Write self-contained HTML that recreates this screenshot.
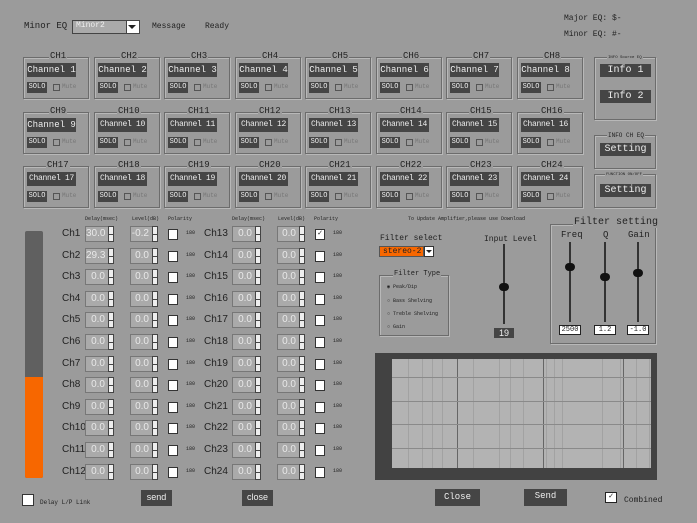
<!DOCTYPE html><html><head><meta charset="utf-8"><style>
body{margin:0;width:697px;height:523px;background:#9b9b9b;position:relative;overflow:hidden;font-family:"Liberation Mono","DejaVu Sans Mono",monospace;color:#222}
div,span{position:absolute;box-sizing:border-box}
.t{font-size:9px;white-space:nowrap}
.grp{border:1px solid #6c6c6c;box-shadow:1px 1px 0 #b8b8b8 inset,1px 1px 0 #b8b8b8}
.lg{font-size:9px;background:#9b9b9b;padding:0 1px;top:-7px;line-height:11px;color:#222;white-space:nowrap}
.dk{background:#454545;color:#eee;font-size:9px;text-align:center;line-height:13px;white-space:nowrap;overflow:hidden}
.cb{width:7px;height:7px;border:1px solid #555;background:#9b9b9b}
.inp{background:#aaa;border:1px solid #777;border-right:none;color:#e8e8e8;font-size:10px;text-align:right;padding-right:3px;line-height:14px;font-family:"Liberation Sans",sans-serif}
.sp{background:#eee;border:1px solid #444;width:6px;height:16px}
.sp:after{content:"";position:absolute;left:0;right:0;top:7px;height:1px;background:#444}
.wc{width:10px;height:11px;background:#fff;border:1px solid #333;text-align:center}
.ch{font-family:"Liberation Sans",sans-serif;font-size:10px;color:#222}
</style></head><body>
<div class="t" style="left:24px;top:21px">Minor EQ</div>
<div style="left:72px;top:20px;width:68px;height:14px;background:#aaa;border:1px solid #444"><span class="t" style="left:3px;top:0;color:#eee;font-size:8px">Minor2</span><span style="right:0;top:0;width:13px;height:12px;background:#fff;border-left:1px solid #444"></span><span style="right:3px;top:4px;border:4px solid transparent;border-top:4px solid #222"></span></div>
<div class="t" style="left:152px;top:22px;font-size:8px">Message</div>
<div class="t" style="left:205px;top:22px;font-size:8px">Ready</div>
<div class="t" style="left:564px;top:14px;font-size:8px">Major EQ:  $-</div>
<div class="t" style="left:564px;top:30px;font-size:8px">Minor EQ:  #-</div>
<div id="c"></div>
<div class="grp" style="left:594px;top:57px;width:62px;height:63px"><span class="lg" style="left:12px;font-size:4px;top:-3px;line-height:6px">INFO Source EQ</span></div>
<div class="dk" style="left:600px;top:64px;width:51px;height:13px;font-size:10px">Info 1</div>
<div class="dk" style="left:600px;top:90px;width:51px;height:13px;font-size:10px">Info 2</div>
<div class="grp" style="left:594px;top:135px;width:62px;height:34px"><span class="lg" style="left:12px;font-size:6px;top:-4px;line-height:8px">INFO CH EQ</span></div>
<div class="dk" style="left:600px;top:143px;width:51px;height:13px;font-size:10px">Setting</div>
<div class="grp" style="left:594px;top:174px;width:62px;height:34px"><span class="lg" style="left:10px;font-size:4px;top:-3px;line-height:6px">FUNCTION ON/OFF</span></div>
<div class="dk" style="left:600px;top:184px;width:51px;height:13px;font-size:10px">Setting</div>
<div style="left:25px;top:231px;width:18px;height:247px;background:#606060;border-radius:2px"></div>
<div style="left:25px;top:377px;width:18px;height:101px;background:#f76700;border-radius:0 0 2px 2px"></div>
<div class="t" style="left:85px;top:216px;font-size:5px">Delay(msec)</div>
<div class="t" style="left:132px;top:216px;font-size:5px">Level(dB)</div>
<div class="t" style="left:168px;top:216px;font-size:5px">Polarity</div>
<div class="t" style="left:232px;top:216px;font-size:5px">Delay(msec)</div>
<div class="t" style="left:278px;top:216px;font-size:5px">Level(dB)</div>
<div class="t" style="left:314px;top:216px;font-size:5px">Polarity</div>
<div id="r"></div>
<div style="left:22px;top:494px;width:12px;height:12px;background:#fff;border:1px solid #333"></div>
<div class="t" style="left:40px;top:499px;font-size:6px">Delay L/P Link</div>
<div class="dk" style="left:141px;top:490px;width:31px;height:16px;line-height:15px;font-family:'Liberation Sans',sans-serif">send</div>
<div class="dk" style="left:242px;top:490px;width:31px;height:16px;line-height:15px;font-family:'Liberation Sans',sans-serif">close</div>
<div class="t" style="left:408px;top:216px;font-size:5px">To Update Amplifier,please use Download</div>
<div class="t" style="left:380px;top:234px;font-size:8px">Filter select</div>
<div style="left:379px;top:246px;width:45px;height:11px;background:#f76700;border:1px solid #555"><span class="t" style="left:3px;top:0;font-size:8px;line-height:9px;color:#222">stereo-2</span></div>
<div style="left:424px;top:246px;width:10px;height:11px;background:#fff;border:1px solid #333"><span style="left:1px;top:3px;border:3px solid transparent;border-top:3px solid #222"></span></div>
<div class="grp" style="left:379px;top:275px;width:70px;height:61px"><span class="lg" style="left:13px;font-size:7px">Filter Type</span></div>
<div class="t" style="left:387px;top:284px;font-size:5px">◉  Peak/Dip</div>
<div class="t" style="left:387px;top:298px;font-size:5px">○  Bass Shelving</div>
<div class="t" style="left:387px;top:311px;font-size:5px">○  Treble Shelving</div>
<div class="t" style="left:387px;top:324px;font-size:5px">○  Gain</div>
<div class="t" style="left:484px;top:235px;font-size:8px">Input Level</div>
<div style="left:503px;top:244px;width:2px;height:80px;background:#333"></div>
<div style="left:499px;top:283px;width:10px;height:8px;background:#111;border-radius:4px"></div>
<div class="dk" style="left:494px;top:328px;width:20px;height:10px;line-height:10px;font-family:'Liberation Sans',sans-serif">19</div>
<div class="grp" style="left:550px;top:224px;width:106px;height:120px"><span class="lg" style="left:22px;font-size:10px;top:-8px">Filter setting</span></div>
<div class="t" style="left:561px;top:230px;font-size:9px">Freq</div>
<div class="t" style="left:603px;top:230px;font-size:9px">Q</div>
<div class="t" style="left:628px;top:230px;font-size:9px">Gain</div>
<div style="left:569px;top:242px;width:2px;height:80px;background:#333"></div>
<div style="left:565px;top:263px;width:10px;height:8px;background:#111;border-radius:4px"></div>
<div style="left:604px;top:242px;width:2px;height:80px;background:#333"></div>
<div style="left:600px;top:273px;width:10px;height:8px;background:#111;border-radius:4px"></div>
<div style="left:637px;top:242px;width:2px;height:80px;background:#333"></div>
<div style="left:633px;top:269px;width:10px;height:8px;background:#111;border-radius:4px"></div>
<div style="left:559px;top:325px;width:22px;height:10px;background:#fff;border:1px solid #222;font-size:7px;text-align:center;line-height:8px">2500</div>
<div style="left:594px;top:325px;width:22px;height:10px;background:#fff;border:1px solid #222;font-size:7px;text-align:center;line-height:8px">1.2</div>
<div style="left:627px;top:325px;width:22px;height:10px;background:#fff;border:1px solid #222;font-size:7px;text-align:center;line-height:8px">-1.0</div>
<div style="left:375px;top:353px;width:282px;height:127px;background:#424242"></div>
<div id="g" style="left:392px;top:359px;width:259px;height:109px;background:#b3b3b3;overflow:hidden"></div>
<div class="dk" style="left:435px;top:489px;width:45px;height:17px;line-height:17px">Close</div>
<div class="dk" style="left:524px;top:489px;width:43px;height:17px;line-height:15px">Send</div>
<div style="left:605px;top:492px;width:12px;height:11px;background:#fff;border:1px solid #222;font-size:8px;line-height:8px;text-align:center">✓</div>
<div class="t" style="left:624px;top:496px;font-size:8px">Combined</div>
<script>
var c='';
for(var r=0;r<3;r++)for(var k=0;k<8;k++){var n=r*8+k+1,x=23+Math.round(k*70.5),y=[57,112,166][r];
c+='<div class="grp" style="left:'+x+'px;top:'+y+'px;width:66px;height:42px"><span class="lg" style="left:'+(n>9?22:25)+'px;font-size:9px">CH'+n+'</span></div>';
c+='<div class="dk" style="left:'+(x+4)+'px;top:'+(y+6)+'px;width:49px;height:14px;line-height:14px;font-size:'+(n>9?'8px;letter-spacing:-0.3px':'9px')+'">Channel '+n+'</div>';
c+='<div class="dk" style="left:'+(x+4)+'px;top:'+(y+25)+'px;width:20px;height:11px;line-height:11px;font-size:7px">SOLO</div>';
c+='<div class="cb" style="left:'+(x+30)+'px;top:'+(y+27)+'px"></div><span class="t" style="left:'+(x+39)+'px;top:'+(y+26)+'px;font-size:6px;color:#777">Mute</span>';}
document.getElementById('c').innerHTML=c;
var h='',dv=['30.0','29.3'],lv=['-0.2'];
for(var i=0;i<24;i++){var L=i<12,row=i%12,y=226+Math.round(row*21.6),o=L?0:147;
h+='<span class="ch" style="left:'+(L?62:204)+'px;top:'+(y+2)+'px">Ch'+(i+1)+'</span>';
h+='<div class="inp" style="left:'+(85+o)+'px;top:'+y+'px;width:23px;height:16px">'+(dv[i]||'0.0')+'</div><div class="sp" style="left:'+(108+o)+'px;top:'+y+'px"></div>';
h+='<div class="inp" style="left:'+(130+o)+'px;top:'+y+'px;width:22px;height:16px">'+(lv[i]||'0.0')+'</div><div class="sp" style="left:'+(152+o)+'px;top:'+y+'px"></div>';
h+='<div class="wc" style="left:'+(168+o)+'px;top:'+(y+3)+'px;font-size:8px;line-height:8px">'+(i==12?'✓':'')+'</div>';
h+='<span class="t" style="left:'+(186+o)+'px;top:'+(y+4)+'px;font-size:5px">180</span>';}
document.getElementById('r').innerHTML=h;
var g='',xs=[16,30,40,50,81,107,118,131,154,162,170,210,228,244,257],xd=[65,151,231];
xs.forEach(function(x){g+='<div style="left:'+x+'px;top:0;width:1px;height:109px;background:#a2a2a2"></div>'});
xd.forEach(function(x){g+='<div style="left:'+x+'px;top:0;width:1px;height:109px;background:#666"></div>'});
[18,42,65,89].forEach(function(y){g+='<div style="left:0;top:'+y+'px;width:259px;height:1px;background:#8a8a8a"></div>'});
document.getElementById('g').innerHTML=g;
</script>
</body></html>
